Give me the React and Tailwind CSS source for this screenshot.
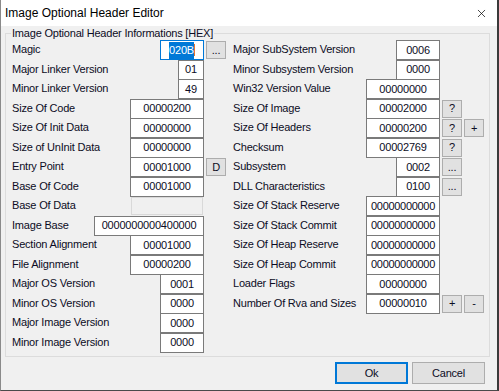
import { X } from 'lucide-react';

const leftRows = [
  { label: 'Magic', value: '020B', w: 'w-[44px]', focus: true, btns: ['...'] },
  { label: 'Major Linker Version', value: '01', w: 'w-[26px]' },
  { label: 'Minor Linker Version', value: '49', w: 'w-[26px]' },
  { label: 'Size Of Code', value: '00000200', w: 'w-[74px]' },
  { label: 'Size Of Init Data', value: '00000000', w: 'w-[74px]' },
  { label: 'Size of UnInit Data', value: '00000000', w: 'w-[74px]' },
  { label: 'Entry Point', value: '00001000', w: 'w-[74px]', btns: ['D'] },
  { label: 'Base Of Code', value: '00001000', w: 'w-[74px]' },
  { label: 'Base Of Data', value: '', w: 'w-[74px]', disabled: true },
  { label: 'Image Base', value: '0000000000400000', w: 'w-[110px]' },
  { label: 'Section Alignment', value: '00001000', w: 'w-[74px]' },
  { label: 'File Alignment', value: '00000200', w: 'w-[74px]' },
  { label: 'Major OS Version', value: '0001', w: 'w-[44px]' },
  { label: 'Minor OS Version', value: '0000', w: 'w-[44px]' },
  { label: 'Major Image Version', value: '0000', w: 'w-[44px]' },
  { label: 'Minor Image Version', value: '0000', w: 'w-[44px]' },
];

// 64-bit fields: the edit only shows the first digits
const rightRows = [
  { label: 'Major SubSystem Version', value: '0006', w: 'w-[44px]' },
  { label: 'Minor Subsystem Version', value: '0000', w: 'w-[44px]' },
  { label: 'Win32 Version Value', value: '00000000', w: 'w-[74px]' },
  { label: 'Size Of Image', value: '00002000', w: 'w-[74px]', btns: ['?'] },
  { label: 'Size Of Headers', value: '00000200', w: 'w-[74px]', btns: ['?', '+'] },
  { label: 'Checksum', value: '00002769', w: 'w-[74px]', btns: ['?'] },
  { label: 'Subsystem', value: '0002', w: 'w-[44px]', btns: ['...'] },
  { label: 'DLL Characteristics', value: '0100', w: 'w-[44px]', btns: ['...'] },
  { label: 'Size Of Stack Reserve', value: '00000000000', w: 'w-[74px]', clip: true },
  { label: 'Size Of Stack Commit', value: '00000000000', w: 'w-[74px]', clip: true },
  { label: 'Size Of Heap Reserve', value: '00000000000', w: 'w-[74px]', clip: true },
  { label: 'Size Of Heap Commit', value: '00000000000', w: 'w-[74px]', clip: true },
  { label: 'Loader Flags', value: '00000000', w: 'w-[74px]' },
  { label: 'Number Of Rva and Sizes', value: '00000010', w: 'w-[74px]', btns: ['+', '-'] },
];

function Field({ row }) {
  if (row.disabled) {
    return <div className="mr-[1px] mt-[1px] h-[18px] w-[72px] shrink-0 border border-[#d9d9d9] bg-[#f0f0f0]" />;
  }
  return (
    <div
      className={[
        'flex h-[20px] shrink-0 items-center overflow-hidden whitespace-nowrap border bg-white leading-[17px]',
        row.w,
        row.clip ? 'justify-start pl-[4px] tracking-[-0.3px]' : 'justify-center',
        row.focus ? 'border-[#0078d7]' : 'border-[#7a7a7a]',
      ].join(' ')}
    >
      {row.focus ? (
        <span className="flex items-center">
          <span className="bg-[#0078d7] text-white">{row.value}</span>
          <span className="h-[12px] w-px bg-[#e8742c]" />
        </span>
      ) : (
        row.value
      )}
    </div>
  );
}

function SmallButton({ label }) {
  return (
    <div className="ml-[2px] mt-[1px] flex h-[18px] w-[20px] items-center justify-center border border-[#adadad] bg-[#e1e1e1] leading-none">
      {label}
    </div>
  );
}

function Row({ row, slot, pad }) {
  return (
    <div className="flex h-[19.5px] items-start">
      <div className={`flex-1 whitespace-nowrap leading-[19.5px] ${pad}`}>{row.label}</div>
      <Field row={row} />
      <div className={`flex ${slot}`}>
        {(row.btns || []).map((b, i) => (
          <SmallButton key={i} label={b} />
        ))}
      </div>
    </div>
  );
}

export default function App() {
  return (
    <div
      className="flex h-[391px] w-[499px] flex-col border-b border-l border-r-2 border-b-[#4a4a4a] border-l-[#8a8a8a] border-r-[#3a3a3a] bg-[#f0f0f0] text-[11px] tracking-[-0.2px] text-[#0c0c24]"
      style={{ fontFamily: '"Liberation Sans", Arial, sans-serif' }}
    >
      <div className="flex h-[26px] shrink-0 items-center justify-between bg-white pl-[4px] pr-[9px] text-[12px] tracking-normal text-black">
        <span>Image Optional Header Editor</span>
        <X className="h-[13px] w-[13px]" strokeWidth={1.3} />
      </div>

      <div className="relative ml-[4px] mt-[7px] h-[324px] w-[485px] border border-[#dcdcdc] pt-[6px]">
        <div className="absolute left-[5px] top-[-8px] bg-[#f0f0f0] px-[1px] leading-[14px]">
          Image Optional Header Informations [HEX]
        </div>
        <div className="flex">
          <div className="flex w-[220px] flex-col">
            {leftRows.map((r) => (
              <Row key={r.label} row={r} slot="w-[22px]" pad="pl-[6px]" />
            ))}
          </div>
          <div className="flex w-[258px] flex-col">
            {rightRows.map((r) => (
              <Row key={r.label} row={r} slot="w-[44px]" pad="pl-[7px]" />
            ))}
          </div>
        </div>
      </div>

      <div className="mt-[5px] flex justify-end gap-[4px] pr-[12px]">
        <div className="flex h-[22px] w-[73px] items-center justify-center border-2 border-[#0078d7] bg-[#e1e1e1]">
          Ok
        </div>
        <div className="flex h-[22px] w-[73px] items-center justify-center border border-[#adadad] bg-[#e1e1e1]">
          Cancel
        </div>
      </div>
    </div>
  );
}
